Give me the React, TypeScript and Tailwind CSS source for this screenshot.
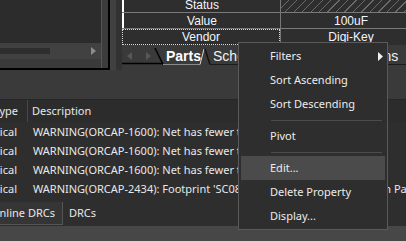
import React from 'react';

const rows = [
  "WARNING(ORCAP-1600): Net has fewer than two connections",
  "WARNING(ORCAP-1600): Net has fewer than two connections",
  "WARNING(ORCAP-1600): Net has fewer than two connections",
  "WARNING(ORCAP-2434): Footprint 'SC0805' not found in PSM path on Page1",
];

const menuItems: (string | null)[] = [
  'Filters',
  'Sort Ascending',
  'Sort Descending',
  null,
  'Pivot',
  null,
  'Edit...',
  'Delete Property',
  'Display...',
];

function TabStrip() {
  return (
    <div className="relative h-[25px] bg-[#3a3a3a] flex items-start pt-[4px] font-['Liberation_Sans',Arial,sans-serif] text-[14px]">
      {/* tab outlines */}
      <svg className="absolute inset-0" width="284" height="25" viewBox="0 0 284 25">
        <line x1="0" y1="18.5" x2="41" y2="18.5" stroke="#000" strokeWidth="1.5" />
        <line x1="33" y1="3" x2="41" y2="19.5" stroke="#000" strokeWidth="1.5" />
        <line x1="41" y1="19.5" x2="78" y2="19.5" stroke="#8a8a8a" strokeWidth="1" />
        <line x1="78" y1="19.5" x2="82" y2="4" stroke="#d8d8d8" strokeWidth="1" />
        <line x1="83" y1="4" x2="88" y2="19.5" stroke="#111" strokeWidth="1.5" />
        <line x1="88" y1="19.5" x2="284" y2="19.5" stroke="#1c1c1c" strokeWidth="1" />
      </svg>
      <svg className="absolute left-[5px] top-[7px]" width="5" height="8" viewBox="0 0 5 8">
        <polygon points="5,0 5,8 0,4" fill="#585858" />
      </svg>
      <svg className="absolute left-[24px] top-[7px]" width="5" height="8" viewBox="0 0 5 8">
        <polygon points="0,0 0,8 5,4" fill="#585858" />
      </svg>
      <span className="relative ml-[44px] font-bold text-white leading-[14px]">Parts</span>
      <span className="relative ml-[12px] text-[#f2f2f2] leading-[14px] whitespace-nowrap">Schematic Nets</span>
      <span className="relative ml-[60px] text-[#f2f2f2] leading-[14px]">Pins</span>
    </div>
  );
}

function PropertyTable() {
  return (
    <div className="flex-1 min-w-0 overflow-hidden flex flex-col bg-[#2e2e2e] font-['Liberation_Sans',Arial,sans-serif] text-[12px] text-[#f3f6ff]">
      <div className="flex h-[13px] shrink-0 border-b border-[#7a7a7a]">
        <div className="w-[158px] shrink-0 border-l-2 border-white flex items-end justify-center leading-none pb-[1px]">Status</div>
        <div className="w-px shrink-0 bg-[#777]" />
        <div className="w-[140px] shrink-0 bg-[repeating-linear-gradient(135deg,#2e2e2e_0px,#2e2e2e_5px,#6a6a6a_5px,#6a6a6a_6px)]" />
      </div>
      <div className="flex h-[16px] shrink-0 border-b border-[#7a7a7a]">
        <div className="w-[158px] shrink-0 border-l-2 border-white flex items-center justify-center leading-none">Value</div>
        <div className="w-px shrink-0 bg-[#777]" />
        <div className="w-[140px] shrink-0 flex items-center justify-center leading-none">100uF</div>
      </div>
      <div className="flex h-[16px] shrink-0">
        <div className="w-[158px] shrink-0 border border-dotted border-[#d8d8d8] flex items-center justify-center leading-none">Vendor</div>
        <div className="w-px shrink-0 bg-[#777]" />
        <div className="w-[140px] shrink-0 flex items-center justify-center leading-none">Digi-Key</div>
      </div>
      <TabStrip />
    </div>
  );
}

function TopArea() {
  return (
    <div className="flex h-[70px] bg-[#3f3f3f]">
      <div className="w-[110px] h-[70px] shrink-0 flex border-r-2 border-b-2 border-black bg-[#3c3c3c]">
        <div className="w-[101px] flex flex-col">
          <div className="h-[43px] bg-[#2c2c2c]" />
          <div className="h-[16px] bg-[#414141] flex items-center">
            <div className="w-[50px] h-[6px] bg-[#2e2e2e]" />
            <svg className="ml-[41px]" width="5" height="8" viewBox="0 0 5 8">
              <polygon points="0,0 0,8 5,4" fill="#8c8c8c" />
            </svg>
          </div>
          <div className="flex-1 bg-[#3a3a3a]" />
        </div>
        <div className="w-px bg-[#555]" />
      </div>
      <div className="w-[6px] shrink-0 bg-[#404040]" />
      <div className="w-[6px] shrink-0 bg-[#323232]" />
      <PropertyTable />
    </div>
  );
}

function ContextMenu() {
  return (
    <div className="absolute left-[238px] top-[42px] w-[150px] h-[188px] bg-[#2e2e2e] border border-[#5a5a5a] p-[1px] px-[2px] font-['Noto_Sans',sans-serif] text-[11px] text-[#ececec]">
      {menuItems.map((item, i) =>
        item === null ? (
          <div key={i} className="h-[8px] flex items-center pl-[30px] pr-[3px]">
            <div className="h-px w-full bg-[#4c4c4c]" />
          </div>
        ) : (
          <div
            key={i}
            className={`h-[24px] flex items-center pl-[29px] relative ${item === 'Edit...' ? 'bg-[#4b4b4b]' : ''}`}
          >
            {item}
            {item === 'Filters' && (
              <svg className="absolute right-[2px] top-[8px]" width="5" height="9" viewBox="0 0 5 9">
                <polygon points="0,0 0,9 5,4.5" fill="#f0f0f0" />
              </svg>
            )}
          </div>
        )
      )}
    </div>
  );
}

function MessagePane() {
  return (
    <div className="flex flex-col font-['Noto_Sans',sans-serif] text-[11px] text-[#e8e8e8]">
      <div className="h-[29px] bg-[#3a3a3a]" />
      <div className="h-[23px] flex bg-[#2c2c2c] border-t border-[#262626]">
        <div className="w-[27px] shrink-0 flex items-center justify-end overflow-hidden pr-[9px] whitespace-nowrap">Type</div>
        <div className="w-px bg-[#474747]" />
        <div className="pl-[4px] flex items-center">Description</div>
      </div>
      <div className="h-[78px] bg-[#2e2e2e] pt-[1px]">
        {rows.map((r, i) => (
          <div key={i} className="h-[19px] flex items-center whitespace-nowrap">
            <div className="w-[27px] shrink-0 flex justify-end overflow-hidden pr-[10px]">Critical</div>
            <div className="pl-[6px]">{r}</div>
          </div>
        ))}
      </div>
      <div className="h-[26px] bg-[#2e2e2e] flex items-start pt-[2px]">
        <div className="w-[63px] h-[23px] shrink-0 flex items-center justify-end pr-[7px] border-r border-b border-[#555] bg-[#353535] overflow-hidden whitespace-nowrap">
          Online DRCs
        </div>
        <div className="h-[23px] flex items-center pl-[6px]">DRCs</div>
      </div>
      <div className="h-[15px] bg-[#474747]" />
    </div>
  );
}

export default function App() {
  return (
    <div className="relative w-[406px] h-[241px] overflow-hidden bg-[#3a3a3a]">
      <TopArea />
      <MessagePane />
      <ContextMenu />
    </div>
  );
}
